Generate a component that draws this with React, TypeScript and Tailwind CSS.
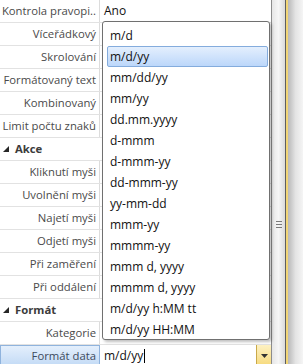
import React from 'react';

type Row = { label: string; value?: string; category?: boolean };

const rows: Row[] = [
  { label: 'Kontrola pravopi..', value: 'Ano' },
  { label: 'Víceřádkový' },
  { label: 'Skrolování' },
  { label: 'Formátovaný text' },
  { label: 'Kombinovaný' },
  { label: 'Limit počtu znaků' },
  { label: 'Akce', category: true },
  { label: 'Kliknutí myši' },
  { label: 'Uvolnění myši' },
  { label: 'Najetí myši' },
  { label: 'Odjetí myši' },
  { label: 'Při zaměření' },
  { label: 'Při oddálení' },
  { label: 'Formát', category: true },
  { label: 'Kategorie' },
];

const formats = [
  'm/d',
  'm/d/yy',
  'mm/dd/yy',
  'mm/yy',
  'dd.mm.yyyy',
  'd-mmm',
  'd-mmm-yy',
  'dd-mmm-yy',
  'yy-mm-dd',
  'mmm-yy',
  'mmmm-yy',
  'mmm d, yyyy',
  'mmmm d, yyyy',
  'm/d/yy h:MM tt',
  'm/d/yy HH:MM',
];

const Expander = () => (
  <svg width="6" height="6" viewBox="0 0 6 6" className="shrink-0">
    <polygon points="6,0 6,6 0,6" fill="#262626" />
  </svg>
);

const App: React.FC = () => {
  return (
    <div
      className="relative flex w-[303px] h-[364px] overflow-hidden bg-white text-[11.3px] leading-none"
      style={{ fontFamily: '"Open Sans", "Noto Sans", sans-serif' }}
    >
      {/* Property grid */}
      <div className="flex flex-col w-[271px] shrink-0">
        {rows.map((r) =>
          r.category ? (
            <div key={r.label} className="flex items-center gap-[6px] h-[23px] pl-[3px] border-b border-[#e2e2e2] shrink-0">
              <Expander />
              <span className="font-bold text-[#3c3c3c]">{r.label}</span>
            </div>
          ) : (
            <div key={r.label} className="flex h-[23px] border-b border-[#e2e2e2] shrink-0">
              <div className="w-[100px] shrink-0 flex items-center justify-end pr-[3px] border-r border-[#dcdcdc] text-[#4a4a4a] whitespace-nowrap">
                {r.label}
              </div>
              <div className="flex-1 flex items-center pl-[4px] text-[12px] text-[#111]">{r.value}</div>
            </div>
          )
        )}

        {/* Selected row */}
        <div className="flex h-[22px] shrink-0">
          <div className="w-[100px] shrink-0 flex items-center justify-end pr-[3px] border border-[#8fb3dd] bg-gradient-to-b from-[#e4effc] to-[#c2daf5] text-[#3d4a5c]">
            Formát data
          </div>
          <div className="flex-1 flex items-center pl-[4px] text-[12px] text-[#111]">
            <span>m/d/yy</span>
            <span className="w-px h-[14px] bg-black ml-px" />
            <div className="ml-auto w-[15px] h-full flex items-center justify-center border-l border-[#c9a94a] bg-gradient-to-b from-[#fdf1c2] to-[#f6d875]">
              <svg width="7" height="4" viewBox="0 0 7 4">
                <polygon points="0,0 7,0 3.5,4" fill="#333" />
              </svg>
            </div>
          </div>
        </div>
      </div>

      {/* Scrollbar */}
      <div className="w-[15px] shrink-0 border-l border-[#8c8c8c] border-r border-r-[#5e5e5e] bg-gradient-to-r from-[#e6e6e6] via-[#f6f6f6] to-[#dadada] flex flex-col items-center pt-[221px]">
        <div className="flex flex-col gap-[2px]">
          <div className="w-[6px] h-px bg-[#7a7a7a]" />
          <div className="w-[6px] h-px bg-[#7a7a7a]" />
          <div className="w-[6px] h-px bg-[#7a7a7a]" />
        </div>
      </div>
      <div className="w-[2px] shrink-0 bg-[#f2d677]" />
      <div className="flex-1 bg-gradient-to-r from-[#b9b9b9] via-[#e4e4e4] to-[#f5f5f5]" />

      {/* Dropdown list */}
      <div className="absolute left-[102px] top-[21px] w-[168px] h-[319px] rounded-[3px] border border-[#707070] bg-white shadow-[2px_2px_3px_rgba(0,0,0,0.25)] pt-[3px] pl-[4px] pr-[1px] text-[12px]">
        {formats.map((f, i) => (
          <div
            key={f}
            className={
              i === 1
                ? 'h-[21px] flex items-center pl-[2px] rounded-[2px] border border-[#84acdd] bg-gradient-to-b from-[#e4effd] to-[#bcd7fa] text-[#111]'
                : 'h-[21px] flex items-center pl-[3px] text-[#111]'
            }
          >
            {f}
          </div>
        ))}
      </div>
    </div>
  );
};

export default App;
